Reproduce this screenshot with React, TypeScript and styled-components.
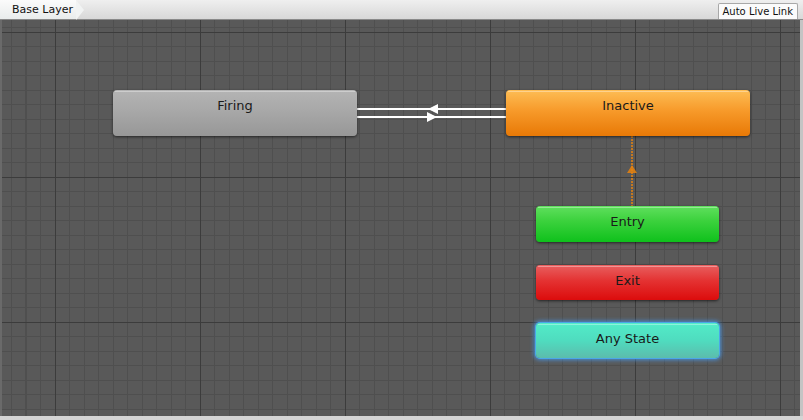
import React from "react";
import styled, { createGlobalStyle, css } from "styled-components";

type Variant = "normal" | "default" | "entry" | "exit" | "any";

type StateNode = {
  id: string;
  label: string;
  x: number;
  y: number;
  w: number;
  h: number;
  variant: Variant;
};

// canvas-local coordinates (canvas content box starts at x=2, y=20)
const nodes: StateNode[] = [
  { id: "firing", label: "Firing", x: 111, y: 70, w: 244, h: 46, variant: "normal" },
  { id: "inactive", label: "Inactive", x: 504, y: 70, w: 244, h: 46, variant: "default" },
  { id: "entry", label: "Entry", x: 534, y: 186, w: 183, h: 36, variant: "entry" },
  { id: "exit", label: "Exit", x: 534, y: 245, w: 183, h: 35, variant: "exit" },
  { id: "any", label: "Any State", x: 534, y: 303, w: 183, h: 35, variant: "any" },
];

const variants: Record<Variant, ReturnType<typeof css>> = {
  normal: css`
    background: linear-gradient(#b4b4b4 0%, #a8a8a8 45%, #979797 100%);
  `,
  default: css`
    background: linear-gradient(#fdbd55 0%, #f79a2a 45%, #e87906 100%);
  `,
  entry: css`
    background: linear-gradient(#60e05e 0%, #3dd23e 40%, #0fc11c 100%);
  `,
  exit: css`
    background: linear-gradient(#e86060 0%, #e43232 45%, #dc0c0c 100%);
  `,
  any: css`
    background: linear-gradient(#52ecc8 0%, #4fdcbf 50%, #5cbcac 100%);
    box-shadow: 0 0 0 1px #4aa7e8, 0 0 4px 2px rgba(70, 150, 235, 0.85);
  `,
};

const GlobalStyle = createGlobalStyle`
  html, body {
    margin: 0;
    padding: 0;
    background: #585858;
  }
  body {
    font-family: "DejaVu Sans", "Liberation Sans", sans-serif;
  }
`;

const Window = styled.div`
  width: 803px;
  height: 420px;
  display: flex;
  flex-direction: column;
  overflow: hidden;
  background: #d6d6d6;
`;

const TopBar = styled.div`
  height: 20px;
  flex: none;
  display: flex;
  align-items: stretch;
  justify-content: space-between;
  background: linear-gradient(#efefef, #d8d8d8);
  border-bottom: 1px solid #8a8a8a;
  box-sizing: border-box;
`;

const LayerTab = styled.div`
  position: relative;
  width: 76px;
  padding-left: 12px;
  display: flex;
  align-items: center;
  font-size: 11px;
  color: #111;
  background: linear-gradient(#fbfbfb, #e9ecec);
  box-sizing: border-box;

  &::after {
    content: "";
    position: absolute;
    right: -8px;
    top: 0;
    width: 0;
    height: 0;
    border-top: 10px solid transparent;
    border-bottom: 10px solid transparent;
    border-left: 8px solid #f1f3f3;
  }
`;

const LiveLink = styled.button`
  margin: 3px 5px 0 0;
  padding: 0 4px;
  height: 16px;
  font-family: "DejaVu Sans", "Liberation Sans", sans-serif;
  font-size: 10px;
  color: #111;
  background: #fbfbfb;
  border: 1px solid #a8a8a8;
  border-bottom: none;
  border-radius: 2px 2px 0 0;
`;

const Body = styled.div`
  flex: 1;
  display: flex;
  padding-bottom: 4px;
  background: #d4d4d4;
`;

const minor = "#4f4f4f";
const major = "#3c3c3c";

const Canvas = styled.div`
  position: relative;
  flex: 1;
  background-color: #595959;
  background-image: repeating-linear-gradient(
      90deg,
      ${major} 0 1px,
      transparent 1px 145px
    ),
    repeating-linear-gradient(180deg, ${major} 0 1px, transparent 1px 145px),
    repeating-linear-gradient(
      90deg,
      ${minor} 0 1px,
      transparent 1px 14px,
      ${minor} 14px 15px,
      transparent 15px 29px
    ),
    repeating-linear-gradient(
      180deg,
      ${minor} 0 1px,
      transparent 1px 14px,
      ${minor} 14px 15px,
      transparent 15px 29px
    );
  background-position: 53px 0, 0 12px, 24px 0, 0 12px;
  border-left: 2px solid #6a6a6a;
  border-right: 3px solid #c4c4c4;
`;

const Node = styled.div<{ $variant: Variant }>`
  position: absolute;
  box-sizing: border-box;
  display: flex;
  justify-content: center;
  padding-top: 8px;
  border-radius: 4px;
  font-size: 13px;
  color: #1a1a1a;
  box-shadow: 0 1px 3px rgba(0, 0, 0, 0.6);
  ${({ $variant }) => variants[$variant]}

  &::before {
    content: "";
    position: absolute;
    left: 2px;
    right: 2px;
    top: 1px;
    height: 1px;
    background: rgba(255, 255, 255, 0.35);
  }
`;

const Links = styled.svg`
  position: absolute;
  left: 0;
  top: 0;
  overflow: visible;
  pointer-events: none;
`;

const Transitions = () => (
  <Links width="798" height="396">
    <g stroke="#ffffff" strokeWidth="2" fill="none">
      <line x1="355" y1="89" x2="504" y2="89" />
      <line x1="355" y1="97" x2="504" y2="97" />
    </g>
    <polygon points="426,89 436,84 436,94" fill="#ffffff" />
    <polygon points="435,97 425,92 425,102" fill="#ffffff" />
    <line
      x1="630"
      y1="116"
      x2="630"
      y2="186"
      stroke="#e8820e"
      strokeWidth="1.5"
      strokeDasharray="2 1"
    />
    <polygon points="630,145 625,153 635,153" fill="#e8820e" opacity="0.85" />
  </Links>
);

export default function App() {
  return (
    <>
      <GlobalStyle />
      <Window>
        <TopBar>
          <LayerTab>Base Layer</LayerTab>
          <LiveLink>Auto Live Link</LiveLink>
        </TopBar>
        <Body>
          <Canvas>
            <Transitions />
            {nodes.map((n) => (
              <Node
                key={n.id}
                $variant={n.variant}
                style={{ left: n.x, top: n.y, width: n.w, height: n.h }}
              >
                {n.label}
              </Node>
            ))}
          </Canvas>
        </Body>
      </Window>
    </>
  );
}
